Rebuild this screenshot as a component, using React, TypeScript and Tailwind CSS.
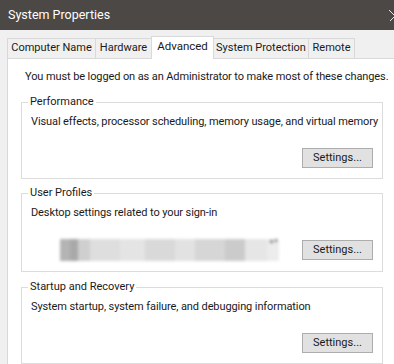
const tabs = [
  { label: "Computer Name", w: "w-[89px]" },
  { label: "Hardware", w: "w-[57px]" },
  { label: "Advanced", w: "w-[63px]", active: true },
  { label: "System Protection", w: "w-[96px]" },
  { label: "Remote", w: "w-[47px]" },
]

const SettingsButton = () => (
  <button className="h-[20px] w-[71px] border border-[#adadad] bg-[#e1e1e1] text-[11px] leading-[18px] text-[#1a1a1a]">
    Settings...
  </button>
)

const Group = ({
  title,
  text,
  className = "",
  children,
}: {
  title: string
  text: string
  className?: string
  children?: React.ReactNode
}) => (
  <fieldset
    className={`ml-[13px] w-[362px] min-w-0 border border-[#dcdcdc] pl-[9px] pr-[9px] pb-[10px] ${className}`}
  >
    <legend className="-ml-[3px] whitespace-nowrap px-[2px] text-[11px] leading-[16px] text-[#1a1a1a]">
      {title}
    </legend>
    <p className="whitespace-nowrap pt-[4px] text-[11px] leading-[16px] tracking-[-0.1px] text-[#1a1a1a]">
      {text}
    </p>
    <div className="mt-[18px] flex items-center justify-between">
      {children ?? <span />}
      <SettingsButton />
    </div>
  </fieldset>
)

const BlurredName = () => (
  // pixelated, blurred account name
  <div className="ml-[29px] flex h-[22px] items-stretch blur-[1.5px]">
    <div className="w-[10px] bg-[#b4b4b4]" />
    <div className="w-[8px] bg-[#a9a9a9]" />
    <div className="w-[12px] bg-[#cfcfcf]" />
    <div className="w-[30px] bg-[#dedede]" />
    <div className="w-[25px] bg-[#e4e4e4]" />
    <div className="w-[30px] bg-[#d9d9d9]" />
    <div className="w-[20px] bg-[#e2e2e2]" />
    <div className="w-[30px] bg-[#d6d6d6]" />
    <div className="w-[20px] bg-[#cbcbcb]" />
    <div className="w-[22px] bg-[#e6e6e6]" />
    <div className="relative w-[12px] bg-[#ececec]">
      <span className="absolute left-[3px] top-[1px] h-[3px] w-[3px] bg-[#888]" />
      <span className="absolute left-[8px] top-[0px] h-[3px] w-[2px] bg-[#777]" />
    </div>
  </div>
)

export default function App() {
  return (
    <div
      className="flex h-[364px] w-[394px] flex-col overflow-hidden bg-[#f0f0f0]"
      style={{ fontFamily: 'Roboto, "Liberation Sans", sans-serif' }}
    >
      {/* title bar */}
      <div className="flex h-[30px] shrink-0 items-center justify-between bg-[#4b4846] pl-[8px] text-white">
        <span className="text-[12.5px] leading-none">System Properties</span>
        <svg width="8" height="12" viewBox="0 0 8 12" className="-mr-[1px]">
          <path d="M2 1 L9 8 M2 13 L9 6" stroke="#e8e8e8" strokeWidth="1" fill="none" />
        </svg>
      </div>

      {/* tabs */}
      <div className="flex h-[28px] shrink-0 items-end pl-[7px]">
        {tabs.map((t) =>
          t.active ? (
            <div
              key={t.label}
              className={`relative z-10 -mb-[1px] -mr-[1px] flex h-[23px] ${t.w} items-center justify-center whitespace-nowrap border border-b-0 border-[#d9d9d9] bg-white pb-[3px] text-[11.5px] text-[#1a1a1a]`}
            >
              {t.label}
            </div>
          ) : (
            <div
              key={t.label}
              className={`-mr-[1px] flex h-[20px] ${t.w} items-center justify-center whitespace-nowrap border border-b-0 border-[#d9d9d9] bg-[#f0f0f0] text-[11px] text-[#1a1a1a]`}
            >
              {t.label}
            </div>
          ),
        )}
      </div>

      {/* panel */}
      <div className="ml-[7px] flex-1 border-l border-t border-[#d9d9d9] bg-white pt-[10px]">
        <p className="ml-[17px] whitespace-nowrap text-[11px] leading-[16px] tracking-[-0.1px] text-[#1a1a1a]">
          You must be logged on as an Administrator to make most of these changes.
        </p>

        <Group
          className="mt-[9px]"
          title="Performance"
          text="Visual effects, processor scheduling, memory usage, and virtual memory"
        />
        <Group className="mt-[6px]" title="User Profiles" text="Desktop settings related to your sign-in">
          <BlurredName />
        </Group>
        <Group
          className="mt-[7px]"
          title="Startup and Recovery"
          text="System startup, system failure, and debugging information"
        />
      </div>
    </div>
  )
}
